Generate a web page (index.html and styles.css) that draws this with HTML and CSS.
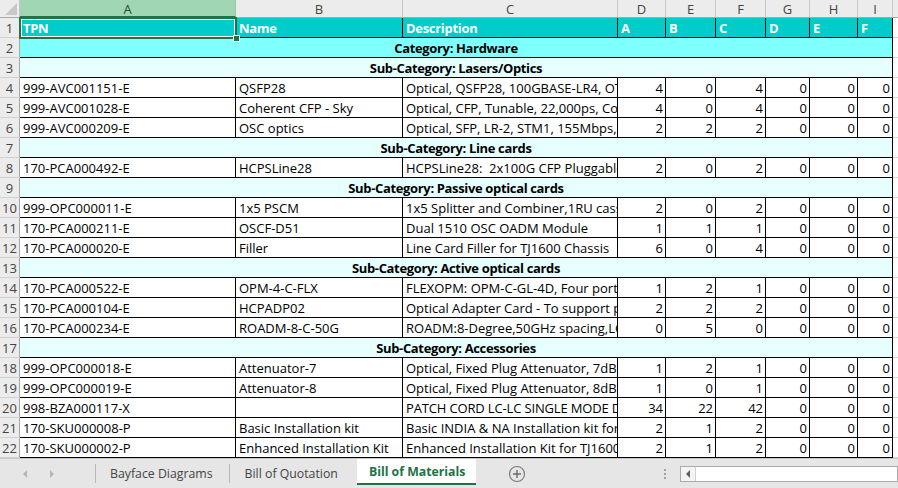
FILE: index.html
```html
<!DOCTYPE html>
<html>
<head>
<meta charset="utf-8">
<link rel="stylesheet" href="styles.css">
</head>
<body>
<div class="app">
  <div class="grid">
    <div class="row hdr">
      <div class="corner"><svg width="12" height="12" viewBox="0 0 12 12"><polygon points="12,0 12,12 0,12" fill="#c8c8c8"/></svg></div>
      <div class="ch sel">A</div><div class="ch">B</div><div class="ch">C</div><div class="ch">D</div><div class="ch">E</div><div class="ch">F</div><div class="ch">G</div><div class="ch">H</div><div class="ch">I</div><div class="ch"></div>
    </div>
    <div class="row r-head">
      <div class="rh">1</div><div class="c">TPN</div><div class="c">Name</div><div class="c">Description</div><div class="c">A</div><div class="c">B</div><div class="c">C</div><div class="c">D</div><div class="c">E</div><div class="c">F</div><div class="c x"></div>
    </div>
    <div class="row r-cat">
      <div class="rh">2</div><div class="c m">Category: Hardware</div><div class="c x"></div>
    </div>
    <div class="row r-sub">
      <div class="rh">3</div><div class="c m">Sub-Category: Lasers/Optics</div><div class="c x"></div>
    </div>
    <div class="row">
      <div class="rh">4</div><div class="c">999-AVC001151-E</div><div class="c">QSFP28</div><div class="c">Optical, QSFP28, 100GBASE-LR4, OTU4, 10km</div><div class="c n">4</div><div class="c n">0</div><div class="c n">4</div><div class="c n">0</div><div class="c n">0</div><div class="c n">0</div><div class="c x"></div>
    </div>
    <div class="row">
      <div class="rh">5</div><div class="c">999-AVC001028-E</div><div class="c">Coherent CFP - Sky</div><div class="c">Optical, CFP, Tunable, 22,000ps, Coherent</div><div class="c n">4</div><div class="c n">0</div><div class="c n">4</div><div class="c n">0</div><div class="c n">0</div><div class="c n">0</div><div class="c x"></div>
    </div>
    <div class="row">
      <div class="rh">6</div><div class="c">999-AVC000209-E</div><div class="c">OSC optics</div><div class="c">Optical, SFP, LR-2, STM1, 155Mbps, 1510nm</div><div class="c n">2</div><div class="c n">2</div><div class="c n">2</div><div class="c n">0</div><div class="c n">0</div><div class="c n">0</div><div class="c x"></div>
    </div>
    <div class="row r-sub">
      <div class="rh">7</div><div class="c m">Sub-Category: Line cards</div><div class="c x"></div>
    </div>
    <div class="row">
      <div class="rh">8</div><div class="c">170-PCA000492-E</div><div class="c">HCPSLine28</div><div class="c">HCPSLine28:&nbsp; 2x100G CFP Pluggable Line Card</div><div class="c n">2</div><div class="c n">0</div><div class="c n">2</div><div class="c n">0</div><div class="c n">0</div><div class="c n">0</div><div class="c x"></div>
    </div>
    <div class="row r-sub">
      <div class="rh">9</div><div class="c m">Sub-Category: Passive optical cards</div><div class="c x"></div>
    </div>
    <div class="row">
      <div class="rh">10</div><div class="c">999-OPC000011-E</div><div class="c">1x5 PSCM</div><div class="c">1x5 Splitter and Combiner,1RU cassette</div><div class="c n">2</div><div class="c n">0</div><div class="c n">2</div><div class="c n">0</div><div class="c n">0</div><div class="c n">0</div><div class="c x"></div>
    </div>
    <div class="row">
      <div class="rh">11</div><div class="c">170-PCA000211-E</div><div class="c">OSCF-D51</div><div class="c">Dual 1510 OSC OADM Module</div><div class="c n">1</div><div class="c n">1</div><div class="c n">1</div><div class="c n">0</div><div class="c n">0</div><div class="c n">0</div><div class="c x"></div>
    </div>
    <div class="row">
      <div class="rh">12</div><div class="c">170-PCA000020-E</div><div class="c">Filler</div><div class="c">Line Card Filler for TJ1600 Chassis</div><div class="c n">6</div><div class="c n">0</div><div class="c n">4</div><div class="c n">0</div><div class="c n">0</div><div class="c n">0</div><div class="c x"></div>
    </div>
    <div class="row r-sub">
      <div class="rh">13</div><div class="c m">Sub-Category: Active optical cards</div><div class="c x"></div>
    </div>
    <div class="row">
      <div class="rh">14</div><div class="c">170-PCA000522-E</div><div class="c">OPM-4-C-FLX</div><div class="c">FLEXOPM: OPM-C-GL-4D, Four port OPM</div><div class="c n">1</div><div class="c n">2</div><div class="c n">1</div><div class="c n">0</div><div class="c n">0</div><div class="c n">0</div><div class="c x"></div>
    </div>
    <div class="row">
      <div class="rh">15</div><div class="c">170-PCA000104-E</div><div class="c">HCPADP02</div><div class="c">Optical Adapter Card - To support pluggables</div><div class="c n">2</div><div class="c n">2</div><div class="c n">2</div><div class="c n">0</div><div class="c n">0</div><div class="c n">0</div><div class="c x"></div>
    </div>
    <div class="row">
      <div class="rh">16</div><div class="c">170-PCA000234-E</div><div class="c">ROADM-8-C-50G</div><div class="c">ROADM:8-Degree,50GHz spacing,LCoS WSS</div><div class="c n">0</div><div class="c n">5</div><div class="c n">0</div><div class="c n">0</div><div class="c n">0</div><div class="c n">0</div><div class="c x"></div>
    </div>
    <div class="row r-sub">
      <div class="rh">17</div><div class="c m">Sub-Category: Accessories</div><div class="c x"></div>
    </div>
    <div class="row">
      <div class="rh">18</div><div class="c">999-OPC000018-E</div><div class="c">Attenuator-7</div><div class="c">Optical, Fixed Plug Attenuator, 7dB, LC</div><div class="c n">1</div><div class="c n">2</div><div class="c n">1</div><div class="c n">0</div><div class="c n">0</div><div class="c n">0</div><div class="c x"></div>
    </div>
    <div class="row">
      <div class="rh">19</div><div class="c">999-OPC000019-E</div><div class="c">Attenuator-8</div><div class="c">Optical, Fixed Plug Attenuator, 8dB, LC</div><div class="c n">1</div><div class="c n">0</div><div class="c n">1</div><div class="c n">0</div><div class="c n">0</div><div class="c n">0</div><div class="c x"></div>
    </div>
    <div class="row">
      <div class="rh">20</div><div class="c">998-BZA000117-X</div><div class="c"></div><div class="c tight">PATCH CORD LC-LC SINGLE MODE DUPLEX</div><div class="c n">34</div><div class="c n">22</div><div class="c n">42</div><div class="c n">0</div><div class="c n">0</div><div class="c n">0</div><div class="c x"></div>
    </div>
    <div class="row">
      <div class="rh">21</div><div class="c">170-SKU000008-P</div><div class="c">Basic Installation kit</div><div class="c">Basic INDIA &amp; NA Installation kit for TJ1600</div><div class="c n">2</div><div class="c n">1</div><div class="c n">2</div><div class="c n">0</div><div class="c n">0</div><div class="c n">0</div><div class="c x"></div>
    </div>
    <div class="row">
      <div class="rh">22</div><div class="c">170-SKU000002-P</div><div class="c">Enhanced Installation Kit</div><div class="c">Enhanced Installation Kit for TJ1600 Chassis</div><div class="c n">2</div><div class="c n">1</div><div class="c n">2</div><div class="c n">0</div><div class="c n">0</div><div class="c n">0</div><div class="c x"></div>
    </div>
    <div class="selection"></div>
    <div class="handle"></div>
  </div>
  <div class="tabbar">
    <div class="nav">
      <svg width="8" height="10" viewBox="0 0 8 10"><polygon points="6,1 2,5 6,9" fill="#b5b5b5"/></svg>
      <svg width="8" height="10" viewBox="0 0 8 10"><polygon points="2,1 6,5 2,9" fill="#b5b5b5"/></svg>
    </div>
    <div class="tab first">Bayface Diagrams</div>
    <div class="tab second">Bill of Quotation</div>
    <div class="tab active">Bill of Materials</div>
    <div class="add"><svg width="18" height="18" viewBox="0 0 18 18"><circle cx="9" cy="9" r="7.5" fill="none" stroke="#7a7a7a" stroke-width="1.2"/><path d="M9 5v8M5 9h8" stroke="#6a6a6a" stroke-width="1.4"/></svg></div>
    <div class="dots"><span></span><span></span><span></span></div>
    <div class="hscroll">
      <div class="sbtn"><svg width="6" height="8" viewBox="0 0 6 8"><polygon points="5,0 1,4 5,8" fill="#606060"/></svg></div>
      <div class="track"></div>
    </div>
  </div>
</div>
</body>
</html>
```
FILE: styles.css
```css
html, body {
  margin: 0;
  padding: 0;
  background: #ffffff;
}
.app {
  width: 898px;
  height: 488px;
  overflow: hidden;
  display: flex;
  flex-direction: column;
  font-family: "Open Sans", "Liberation Sans", sans-serif;
}
.grid {
  position: relative;
  height: 458px;
  overflow: hidden;
  flex: none;
}
.row {
  display: grid;
  grid-template-columns: 20px 216px 167px 215px 48px 50px 50px 44px 48px 35px 30px;
  height: 20px;
  width: 923px;
}
.row > div {
  box-sizing: border-box;
  border-right: 1px solid #000;
  border-bottom: 1px solid #000;
  font-size: 13px;
  line-height: 20px;
  padding: 0 3px;
  white-space: nowrap;
  overflow: hidden;
  color: #000;
}
.row > .tight {
  letter-spacing: -0.15px;
}
.row.hdr {
  height: 18px;
}
.row.hdr > div {
  background: #ececec;
  border-right: 1px solid #c6c6c6;
  border-bottom: 1px solid #a8a8a8;
  color: #444;
  text-align: center;
  line-height: 18px;
  font-size: 13px;
  padding: 0;
}
.row.hdr > .ch.sel {
  background: #a1d6b4;
  color: #1f4f32;
  border-bottom: 2px solid #217346;
  border-right-color: #9cc4aa;
}
.row.hdr > .corner {
  display: flex;
  align-items: flex-end;
  justify-content: flex-end;
  padding: 0 2px 2px 0;
}
.row > .rh {
  background: #ececec;
  border-right: 1px solid #a8a8a8;
  border-bottom: 1px solid #d0d0d0;
  color: #444;
  text-align: center;
  padding: 0;
  font-size: 13px;
}
.row > .x {
  background: #fff;
  border-right: 1px solid #d4d4d4;
  border-bottom: 1px solid #d4d4d4;
}
.r-head > .c {
  background: #00cccc;
  color: #ffffff;
  font-weight: 700;
  letter-spacing: -0.3px;
}
.r-head > .x {
  background: #fff;
}
.m {
  grid-column: 2 / 11;
  text-align: center;
  font-weight: 700;
  letter-spacing: -0.35px;
}
.r-cat > .m {
  background: #80ffff;
}
.r-sub > .m {
  background: #e6ffff;
}
.n {
  text-align: right;
  padding-right: 2px !important;
}
.selection {
  position: absolute;
  left: 19px;
  top: 17px;
  width: 218px;
  height: 22px;
  box-sizing: border-box;
  border: 2px solid #217346;
  box-shadow: inset 0 0 0 1px #ffffff;
}
.handle {
  position: absolute;
  left: 233px;
  top: 35px;
  width: 5px;
  height: 5px;
  background: #217346;
  border: 1px solid #ffffff;
}
.tabbar {
  height: 30px;
  flex: none;
  box-sizing: border-box;
  background: #e6e6e6;
  border-top: 1px solid #c8c8c8;
  display: flex;
  align-items: stretch;
  font-family: "Open Sans", "Liberation Sans", sans-serif;
  font-size: 12.3px;
  color: #444;
}
.nav {
  width: 96px;
  box-sizing: border-box;
  display: flex;
  align-items: center;
  gap: 19px;
  padding-left: 21px;
  border-right: 1px solid #b8b8b8;
  margin: 5px 0;
}
.tab {
  display: flex;
  align-items: center;
  margin: 5px 0;
}
.tab.first {
  padding: 0 16px 0 14px;
  border-right: 1px solid #b8b8b8;
}
.tab.second {
  padding: 0 19px 0 15px;
}
.tab.active {
  margin: 0 0 3px 0;
  background: #ffffff;
  color: #217346;
  font-weight: 700;
  border-bottom: 2px solid #217346;
  padding: 0 11px 0 12px;
}
.add {
  display: flex;
  align-items: center;
  padding-left: 32px;
  width: 112px;
  box-sizing: border-box;
}
.dots {
  display: flex;
  flex-direction: column;
  justify-content: center;
  gap: 2px;
  width: 2px;
  margin-left: 76px;
}
.dots span {
  width: 2px;
  height: 2px;
  background: #a0a0a0;
}
.hscroll {
  flex: 1;
  margin: 7px 0 6px 14px;
  display: flex;
  border: 1px solid #ababab;
  background: #ffffff;
}
.sbtn {
  width: 14px;
  border-right: 1px solid #d0d0d0;
  display: flex;
  align-items: center;
  justify-content: center;
  background: #f4f4f4;
}
.track {
  flex: 1;
}
```
